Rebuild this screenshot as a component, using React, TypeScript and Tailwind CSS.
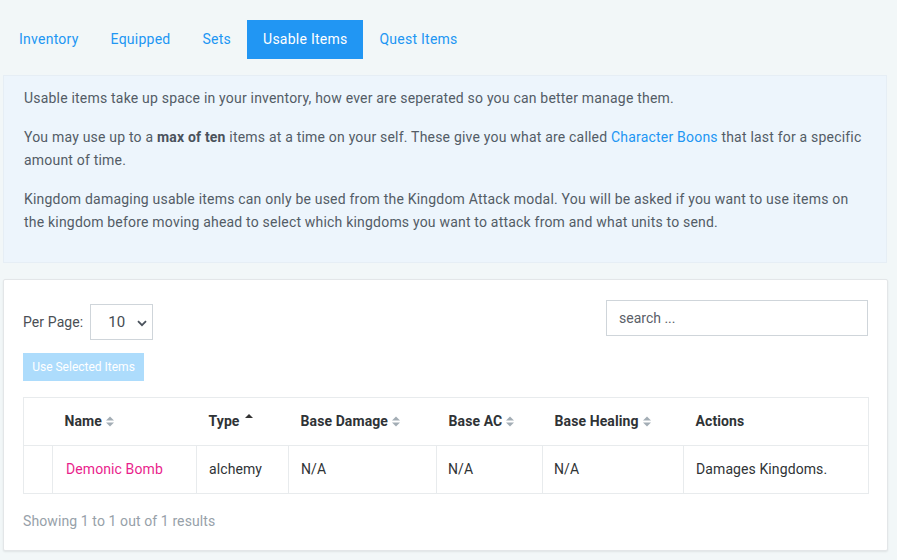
import { useState } from "react";

const tabs = ["Inventory", "Equipped", "Sets", "Usable Items", "Quest Items"];

function SortIcon({ dir }: { dir?: "up" }) {
  if (dir === "up") {
    return (
      <svg width="8" height="10" viewBox="0 0 8 10" className="ml-[5px] -mt-[8px]">
        <path d="M0 5 L4 1 L8 5 Z" fill="#333" />
      </svg>
    );
  }
  return (
    <svg width="8" height="11" viewBox="0 0 8 11" className="ml-[4px]">
      <path d="M0 4.5 L4 0.5 L8 4.5 Z" fill="#a3adb5" />
      <path d="M0 6.5 L4 10.5 L8 6.5 Z" fill="#a3adb5" />
    </svg>
  );
}

const columns: { label: string; w: string; sort?: "both" | "up" }[] = [
  { label: "", w: "w-[29px]" },
  { label: "Name", w: "w-[144px]", sort: "both" },
  { label: "Type", w: "w-[92px]", sort: "up" },
  { label: "Base Damage", w: "w-[148px]", sort: "both" },
  { label: "Base AC", w: "w-[106px]", sort: "both" },
  { label: "Base Healing", w: "w-[141px]", sort: "both" },
  { label: "Actions", w: "w-[185px]" },
];

export default function App() {
  const [tab, setTab] = useState("Usable Items");
  const [perPage, setPerPage] = useState("10");

  return (
    <div
      className="min-h-screen w-full bg-[#f2f7f8] pl-[3px] pt-[20px] text-[14px]"
      style={{ fontFamily: "Roboto, 'Liberation Sans', sans-serif" }}
    >
      {/* Tabs */}
      <div className="flex">
        {tabs.map((t) => (
          <button
            key={t}
            onClick={() => setTab(t)}
            className={
              "h-[39px] px-4 pb-[1px] text-[14px] leading-none tracking-[0.25px] " +
              (tab === t ? "bg-[#2196f3] text-white" : "text-[#2196f3]")
            }
          >
            {t}
          </button>
        ))}
      </div>

      {/* Info */}
      <div className="mt-[16px] w-[884px] border border-[#e6eef5] bg-[#edf5fc] px-5 pt-[11px] pb-[12px] leading-[23px] tracking-[0.2px] text-[#535c66]">
        <p className="mb-4">
          Usable items take up space in your inventory, how ever are seperated so you can better manage them.
        </p>
        <p className="mb-4">
          You may use up to a <strong className="font-bold text-[#4a525c]">max of ten</strong> items at a time on your
          self. These give you what are called <a className="text-[#2196f3]">Character Boons</a> that last for a specific
          amount of time.
        </p>
        <p className="mb-4">
          Kingdom damaging usable items can only be used from the Kingdom Attack modal. You will be asked if you want to
          use items on the kingdom before moving ahead to select which kingdoms you want to attack from and what units to
          send.
        </p>
      </div>

      {/* Card */}
      <div className="mt-[16px] w-[885px] rounded-[2px] border border-[#e3e6e8] bg-white px-[19px] pt-[20px] pb-[20px] shadow-[0_1px_2px_rgba(0,0,0,0.08)]">
        <div className="flex items-start justify-between">
          <div className="mt-[4px]">
            <div className="flex items-center">
              <span className="tracking-[0.1px] text-[#4a4f55]">Per Page:</span>
              <div className="relative ml-[7px] h-[36px] w-[63px] border border-[#cfd5da] bg-white">
                <select
                  value={perPage}
                  onChange={(e) => setPerPage(e.target.value)}
                  className="h-full w-full appearance-none bg-transparent pl-[17px] text-[15px] text-[#454b52] outline-none"
                >
                  <option>10</option>
                  <option>25</option>
                  <option>50</option>
                </select>
                <svg
                  width="10"
                  height="7"
                  viewBox="0 0 10 7"
                  className="pointer-events-none absolute right-[5px] top-[15px]"
                >
                  <path d="M1 1.2 L5 5.2 L9 1.2" fill="none" stroke="#4a525c" strokeWidth="1.8" />
                </svg>
              </div>
            </div>
            <button className="mt-[13px] h-[28px] w-[121px] bg-[#addcfc] text-[12px] text-white">
              Use Selected Items
            </button>
          </div>
          <input
            placeholder="search ..."
            className="h-[36px] w-[262px] border border-[#cfd5da] px-[12px] text-[14px] text-[#333] outline-none placeholder:text-[#5a6068]"
          />
        </div>

        <table className="mt-[16px] w-[845px] table-fixed border-collapse border border-[#e8ebed] tracking-[0.1px]">
          <thead>
            <tr className="h-[48px] border-b border-[#e8ebed]">
              {columns.map((c) => (
                <th key={c.label || "sel"} className={c.w + " px-[12px] text-left font-bold text-[#2f3336]"}>
                  <span className="flex items-center">
                    {c.label}
                    {c.sort === "both" && <SortIcon />}
                    {c.sort === "up" && <SortIcon dir="up" />}
                  </span>
                </th>
              ))}
            </tr>
          </thead>
          <tbody>
            <tr className="h-[48px] text-[#2f3336]">
              <td className="border-r border-[#e8ebed]"></td>
              <td className="border-r border-[#e8ebed] px-[13px] text-[#e91e8c]">Demonic Bomb</td>
              <td className="border-r border-[#e8ebed] px-[12px]">alchemy</td>
              <td className="border-r border-[#e8ebed] px-[12px]">N/A</td>
              <td className="border-r border-[#e8ebed] px-[11px]">N/A</td>
              <td className="border-r border-[#e8ebed] px-[11px]">N/A</td>
              <td className="px-[12px]">Damages Kingdoms.</td>
            </tr>
          </tbody>
        </table>

        <div className="mt-[18px] leading-[18px] tracking-[0.1px] text-[#97a1a9]">Showing 1 to 1 out of 1 results</div>
      </div>
    </div>
  );
}
